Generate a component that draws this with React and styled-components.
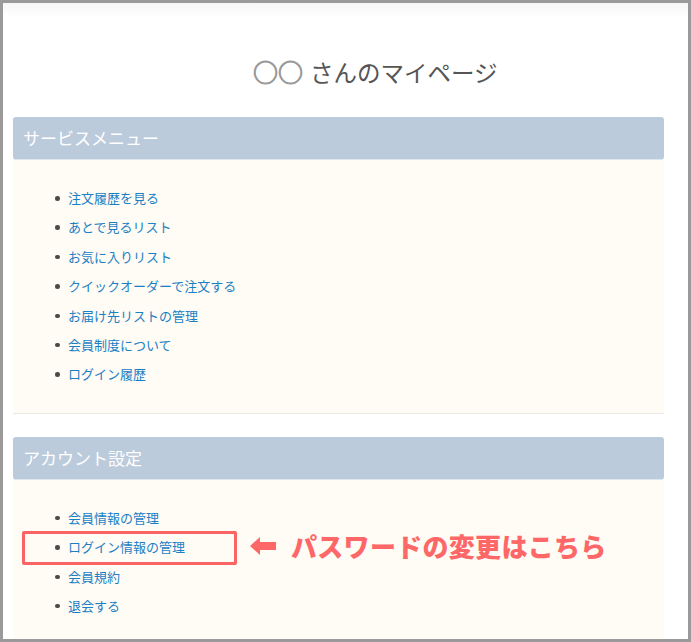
import React from "react";
import styled, { createGlobalStyle } from "styled-components";

const Global = createGlobalStyle`
  html, body { margin: 0; padding: 0; background: #fff; }
  body { font-family: "Noto Sans CJK JP", "Noto Sans", sans-serif; }
  * { box-sizing: border-box; }
`;

const Frame = styled.div`
  width: 691px;
  height: 642px;
  border: 3px solid #9a9a9a;
  overflow: hidden;
  background: linear-gradient(#f6f6f6 0px, #ffffff 14px, #ffffff 100%);
  padding: 0 24px 0 10px;
`;

const Title = styled.h1`
  margin: 0;
  padding: 51px 0 0 240px;
  height: 114px;
  font-size: 23.5px;
  line-height: 34px;
  font-weight: 400;
  color: #555;
  letter-spacing: 0;
`;

const Circles = styled.span`
  color: #9a9a9a;
  font-size: 25px;
  margin-right: 7px;
  -webkit-text-stroke: 1px #9a9a9a;
`;

const Section = styled.section`
  margin-bottom: ${(p) => p.$gap || 0}px;
`;

const Header = styled.h2`
  margin: 0;
  height: 43px;
  line-height: 42px;
  padding-left: 10px;
  background: #bccbdb;
  border-radius: 3px;
  color: #fff;
  font-size: 17px;
  font-weight: 400;
  border-bottom: 1px solid #dfe6ee;
`;

const Body = styled.ul`
  position: relative;
  margin: 0;
  list-style: none;
  padding: 23px 0 24px 55px;
  background: #fffbf5;
  border-bottom: ${(p) => (p.$line ? "1px solid #ece9e4" : "none")};
`;

const Item = styled.li`
  position: relative;
  height: 29.4px;
  line-height: 29.4px;
  font-size: 13px;
  &::before {
    content: "";
    position: absolute;
    left: -13px;
    top: 13px;
    width: 4.5px;
    height: 4.5px;
    border-radius: 50%;
    background: #4a4a4a;
  }
`;

const Link = styled.a`
  color: #1b7fc4;
  text-decoration: none;
`;

const Highlight = styled.div`
  position: absolute;
  left: -46px;
  top: -1px;
  width: 215px;
  height: 34px;
  border: 3px solid #fa6464;
  border-radius: 2px;
  pointer-events: none;
`;

const Note = styled.div`
  position: absolute;
  left: 182px;
  top: -4px;
  display: flex;
  align-items: center;
  gap: 15px;
  white-space: nowrap;
  color: #fd6767;
  font-size: 26px;
  font-weight: 900;
  line-height: 36px;
  letter-spacing: 0.3px;
`;

const Arrow = () => (
  <svg width="26" height="18" viewBox="0 0 26 18">
    <polygon points="0,9 10,0 10,5 26,5 26,13 10,13 10,18" fill="#fd6767" />
  </svg>
);

const service = [
  "注文履歴を見る",
  "あとで見るリスト",
  "お気に入りリスト",
  "クイックオーダーで注文する",
  "お届け先リストの管理",
  "会員制度について",
  "ログイン履歴",
];

const account = ["会員情報の管理", "ログイン情報の管理", "会員規約", "退会する"];

export default function App() {
  return (
    <>
      <Global />
      <Frame>
        <Title>
          <Circles>○○</Circles>さんのマイページ
        </Title>
        <Section $gap={23}>
          <Header>サービスメニュー</Header>
          <Body $line>
            {service.map((t) => (
              <Item key={t}>
                <Link href="#">{t}</Link>
              </Item>
            ))}
          </Body>
        </Section>
        <Section>
          <Header>アカウント設定</Header>
          <Body>
            {account.map((t, i) => (
              <Item key={t}>
                <Link href="#">{t}</Link>
                {i === 1 && (
                  <>
                    <Highlight />
                    <Note>
                      <Arrow />
                      パスワードの変更はこちら
                    </Note>
                  </>
                )}
              </Item>
            ))}
          </Body>
        </Section>
      </Frame>
    </>
  );
}
